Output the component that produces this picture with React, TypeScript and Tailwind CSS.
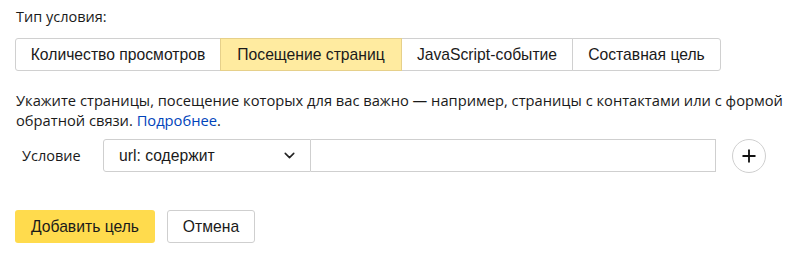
import { ChevronDown, Plus } from "lucide-react";

const TABS = [
  { label: "Количество просмотров", w: "w-[206px]" },
  { label: "Посещение страниц", w: "w-[182px]" },
  { label: "JavaScript-событие", w: "w-[172px]" },
  { label: "Составная цель", w: "w-[149px]" },
];
const ACTIVE = 1;

const arial = { fontFamily: '"Liberation Sans", Arial, sans-serif' };
const ys = { fontFamily: '"Open Sans", "Noto Sans", sans-serif' };

export default function App() {
  return (
    <div className="w-[800px] h-[255px] bg-white text-[#1a1a1a] overflow-hidden pl-[15px] pt-[7px]">
      <div className="text-[14.5px] leading-[20px] pl-[1px]" style={ys}>
        Тип условия:
      </div>

      <div className="flex mt-[11px] h-[33px] text-[15.7px]" style={arial}>
        {TABS.map((t, i) => (
          <div
            key={t.label}
            className={
              "flex items-center justify-center border -ml-px first:ml-0 first:rounded-l-[3px] last:rounded-r-[3px] " +
              t.w +
              " " +
              (i === ACTIVE
                ? "bg-[#ffeba0] border-[#e6d08a] relative z-10"
                : "bg-white border-[#d0d0d0]")
            }
          >
            {t.label}
          </div>
        ))}
      </div>

      <p className="mt-[19px] text-[14.7px] leading-[20px] pl-[1px] whitespace-nowrap" style={ys}>
        Укажите страницы, посещение которых для вас важно — например, страницы с контактами или с формой
        <br />
        обратной связи. <span className="text-[#0044bb]">Подробнее</span>.
      </p>

      <div className="flex items-center mt-[9px] h-[33px]">
        <div className="w-[88px] pl-[7px] text-[14.5px]" style={ys}>
          Условие
        </div>
        <div
          className="flex items-center justify-between w-[208px] h-full border border-[#cfcfcf] rounded-l-[3px] pl-[15px] pr-[12px] text-[15.7px]"
          style={arial}
        >
          <span>url: содержит</span>
          <ChevronDown className="w-[17px] h-[17px] text-[#222]" strokeWidth={2.2} />
        </div>
        <div className="w-[405px] h-full border border-l-0 border-[#cfcfcf]" />
        <div className="ml-[16px] w-[34px] h-[34px] rounded-full border border-[#cfcfcf] flex items-center justify-center">
          <Plus className="w-[20px] h-[20px] text-[#111]" strokeWidth={2.2} />
        </div>
      </div>

      <div className="flex mt-[38px] gap-[12px] text-[15.7px]" style={arial}>
        <div className="h-[33px] w-[140px] rounded-[3px] bg-[#ffdb4d] flex items-center justify-center">
          Добавить цель
        </div>
        <div className="h-[33px] w-[88px] rounded-[3px] border border-[#cfcfcf] bg-white flex items-center justify-center">
          Отмена
        </div>
      </div>
    </div>
  );
}
